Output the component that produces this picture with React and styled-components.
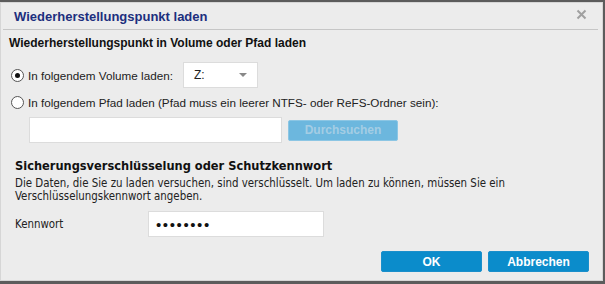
import React, { useState } from 'react';
import styled, { createGlobalStyle } from 'styled-components';

const GlobalStyle = createGlobalStyle`
  html, body {
    margin: 0;
    padding: 0;
    background: #5a5a5a;
    width: 605px;
    height: 284px;
    overflow: hidden;
  }
`;

const Page = styled.div`
  width: 605px;
  height: 284px;
  padding: 2px 2px 3px 0;
  box-sizing: border-box;
  background: #5c5c5c;
`;

const Dialog = styled.div`
  height: 100%;
  background: #ececec;
  border: 1px solid #d6d6d6;
  box-sizing: border-box;
  display: flex;
  flex-direction: column;
  font-family: 'Liberation Sans', Arial, sans-serif;
  color: #1a1a1a;
`;

const TitleBar = styled.div`
  height: 26px;
  margin: 0 4px 0 2px;
  padding: 0 0 0 11px;
  display: flex;
  align-items: center;
  justify-content: space-between;
  border-bottom: 1px solid #c6c6c6;
`;

const Title = styled.h1`
  margin: 0;
  font-size: 13px;
  font-weight: bold;
  color: #1c2f7e;
`;

const Close = styled.span`
  width: 20px;
  display: flex;
  justify-content: center;
  padding: 0 7px 3px 0;
`;

const Body = styled.div`
  flex: 1;
  display: flex;
  flex-direction: column;
  padding: 6px 0 0 8px;
`;

const SectionHead = styled.div`
  font-size: 12px;
  font-weight: bold;
  color: #111;
`;

const Row = styled.label`
  display: flex;
  align-items: center;
  gap: 4px;
  font-size: 11.7px;
  color: #222;
  padding-left: 2px;
`;

const Radio = styled.span`
  width: 11px;
  height: 11px;
  border-radius: 50%;
  border: 1px solid #555;
  background: #fff;
  display: flex;
  align-items: center;
  justify-content: center;
  flex-shrink: 0;

  &::after {
    content: '';
    width: 5px;
    height: 5px;
    border-radius: 50%;
    background: ${(p) => (p.checked ? '#111' : 'transparent')};
  }
`;

const Select = styled.div`
  width: 75px;
  height: 26px;
  margin-left: 6px;
  background: #fff;
  border: 1px solid #dcdcdc;
  box-sizing: border-box;
  display: flex;
  align-items: center;
  justify-content: space-between;
  padding: 0 10px 0 10px;
  font-size: 12px;
`;

const Caret = styled.span`
  width: 0;
  height: 0;
  border-left: 4px solid transparent;
  border-right: 4px solid transparent;
  border-top: 4px solid #888;
`;

const PathRow = styled.div`
  display: flex;
  align-items: center;
  gap: 6px;
  padding-left: 20px;
`;

const Field = styled.div`
  width: ${(p) => p.w}px;
  height: 26px;
  background: #fff;
  border: 1px solid #dcdcdc;
  box-sizing: border-box;
  display: flex;
  align-items: center;
  padding-left: 7px;
`;

const Dots = styled.span`
  font-family: 'Liberation Sans', Arial, sans-serif;
  font-size: 15px;
  letter-spacing: 1.6px;
  color: #111;
`;

const Button = styled.button`
  width: ${(p) => p.w}px;
  height: 21px;
  border: 1px solid ${(p) => (p.disabled ? '#8cc6e4' : '#1b8fcb')};
  border-radius: 2px;
  background: ${(p) => (p.disabled ? '#6cb7de' : '#0b8ccb')};
  color: ${(p) => (p.disabled ? '#a4cde4' : '#fff')};
  font-family: 'Liberation Sans', Arial, sans-serif;
  font-weight: bold;
  font-size: 12px;
  padding: 0;
  cursor: pointer;
`;

const Enc = styled.div`
  font-family: 'DejaVu Sans Condensed', 'DejaVu Sans', Verdana, sans-serif;
  font-stretch: condensed;
  padding-left: 6px;
  display: flex;
  flex-direction: column;
`;

const EncHead = styled.div`
  font-size: 12.7px;
  font-weight: bold;
  color: #111;
`;

const EncText = styled.p`
  margin: 4px 0 0;
  font-size: 11.4px;
  line-height: 13px;
  color: #222;
`;

const PwRow = styled.div`
  display: flex;
  align-items: center;
  margin-top: 8px;
  font-size: 11.4px;
  color: #222;
`;

const PwLabel = styled.span`
  width: 133px;
`;

const Footer = styled.div`
  display: flex;
  justify-content: flex-end;
  gap: 6px;
  padding: 14px 13px 0 0;
`;

export default function App() {
  const [mode, setMode] = useState('volume');

  return (
    <Page>
      <GlobalStyle />
      <Dialog>
        <TitleBar>
          <Title>Wiederherstellungspunkt laden</Title>
          <Close>
            <svg width="11" height="11" viewBox="0 0 11 11">
              <path d="M1.5 1.5 L9.5 9.5 M9.5 1.5 L1.5 9.5" stroke="#a0a0a0" strokeWidth="2" />
            </svg>
          </Close>
        </TitleBar>
        <Body>
          <SectionHead>Wiederherstellungspunkt in Volume oder Pfad laden</SectionHead>
          <Row style={{ marginTop: 12 }} onClick={() => setMode('volume')}>
            <Radio checked={mode === 'volume'} />
            In folgendem Volume laden:
            <Select>
              Z:
              <Caret />
            </Select>
          </Row>
          <Row style={{ marginTop: 8 }} onClick={() => setMode('path')}>
            <Radio checked={mode === 'path'} />
            In folgendem Pfad laden (Pfad muss ein leerer NTFS- oder ReFS-Ordner sein):
          </Row>
          <PathRow style={{ marginTop: 8 }}>
            <Field w={253} />
            <Button w={110} disabled>Durchsuchen</Button>
          </PathRow>
          <Enc style={{ marginTop: 15 }}>
            <EncHead>Sicherungsverschlüsselung oder Schutzkennwort</EncHead>
            <EncText>
              Die Daten, die Sie zu laden versuchen, sind verschlüsselt. Um laden zu können, müssen Sie ein
              <br />
              Verschlüsselungskennwort angeben.
            </EncText>
            <PwRow>
              <PwLabel>Kennwort</PwLabel>
              <Field w={176}>
                <Dots>••••••••</Dots>
              </Field>
            </PwRow>
          </Enc>
          <Footer>
            <Button w={101}>OK</Button>
            <Button w={101}>Abbrechen</Button>
          </Footer>
        </Body>
      </Dialog>
    </Page>
  );
}
